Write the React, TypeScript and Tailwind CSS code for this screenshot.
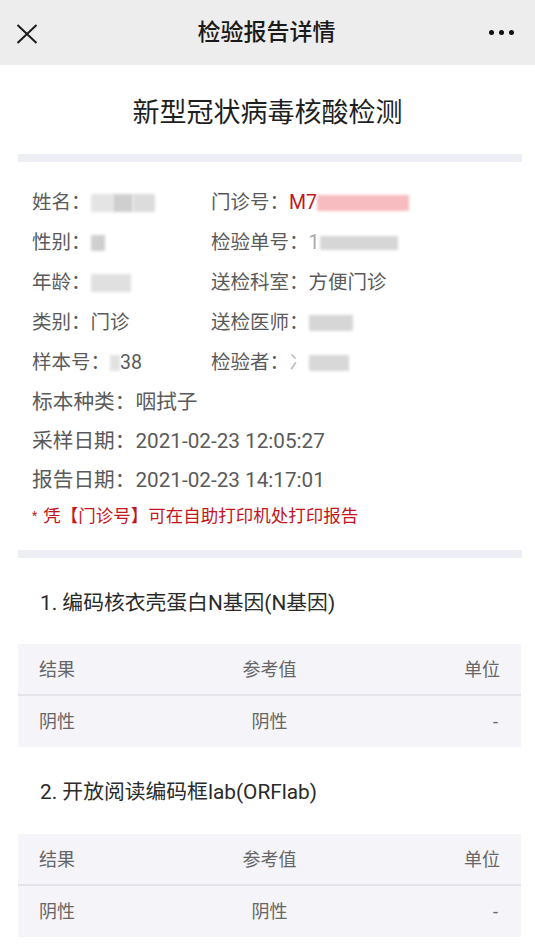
import React from "react";

function Blur({ w, h = 18, color = "bg-[#d9d9d9]", className = "" }: { w: number; h?: number; color?: string; className?: string }) {
  return (
    <span
      className={`inline-block align-middle blur-[1.5px] ${color} ${className}`}
      style={{ width: w, height: h }}
    />
  );
}

function InfoRow({ label, children }: { label: string; children?: React.ReactNode }) {
  return (
    <div className="flex items-center h-full whitespace-nowrap">
      <span>{label}：</span>
      {children}
    </div>
  );
}

const rows: [React.ReactNode, React.ReactNode][] = [
  [
    <InfoRow label="姓名">
      <span className="inline-flex">
        <Blur w={22} color="bg-[#e4e4e4]" />
        <Blur w={20} color="bg-[#cfcfcf]" />
        <Blur w={22} color="bg-[#dcdcdc]" />
      </span>
    </InfoRow>,
    <InfoRow label="门诊号">
      <span className="text-[#c4161c]">M7</span>
      <Blur w={92} h={16} color="bg-[#f7bcbf]" />
    </InfoRow>,
  ],
  [
    <InfoRow label="性别">
      <Blur w={14} h={16} color="bg-[#cfcfcf]" />
    </InfoRow>,
    <InfoRow label="检验单号">
      <span className="text-[#aaa]">1</span>
      <Blur w={78} h={14} color="bg-[#d6d6d6]" />
    </InfoRow>,
  ],
  [
    <InfoRow label="年龄">
      <Blur w={40} h={18} color="bg-[#e0e0e0]" />
    </InfoRow>,
    <InfoRow label="送检科室">方便门诊</InfoRow>,
  ],
  [
    <InfoRow label="类别">门诊</InfoRow>,
    <InfoRow label="送检医师">
      <Blur w={44} h={16} color="bg-[#d6d6d6]" />
    </InfoRow>,
  ],
  [
    <InfoRow label="样本号">
      <Blur w={10} h={16} color="bg-[#e2e2e2]" />
      <span>38</span>
    </InfoRow>,
    <InfoRow label="检验者">
      <span className="text-[#bbb]">冫</span>
      <Blur w={40} h={16} color="bg-[#d8d8d8]" />
    </InfoRow>,
  ],
];

const singles: [string, string][] = [
  ["标本种类", "咽拭子"],
  ["采样日期", "2021-02-23 12:05:27"],
  ["报告日期", "2021-02-23 14:17:01"],
];

function ResultTable() {
  return (
    <div className="ml-[18px] mr-[14px] bg-[#f5f4f8] text-[18px] text-[#666]">
      <div className="grid grid-cols-3 items-center h-[52px] px-[21px] border-b-2 border-[#e4e3e9]">
        <span>结果</span>
        <span className="text-center">参考值</span>
        <span className="text-right">单位</span>
      </div>
      <div className="grid grid-cols-3 items-center h-[51px] px-[21px]">
        <span>阴性</span>
        <span className="text-center">阴性</span>
        <span className="text-right pr-[2px]">-</span>
      </div>
    </div>
  );
}

export default function App() {
  return (
    <div className="w-[535px] min-h-[950px] bg-white font-[Roboto,'Noto_Sans_CJK_SC',sans-serif] pb-4">
      <header className="h-[65px] bg-[#ededed] flex items-center justify-between pl-[16px] pr-[21px]">
        <svg width="22" height="20" viewBox="0 0 22 20" className="mt-[2px]">
          <path d="M1.5 1 L20.5 19 M20.5 1 L1.5 19" stroke="#1c1c1c" strokeWidth="2" />
        </svg>
        <h1 className="text-[23px] font-medium text-[#1a1a1a] mt-[2px] ml-[6px]">检验报告详情</h1>
        <div className="flex gap-[5px]">
          <span className="w-[5px] h-[5px] rounded-full bg-[#111]" />
          <span className="w-[5px] h-[5px] rounded-full bg-[#111]" />
          <span className="w-[5px] h-[5px] rounded-full bg-[#111]" />
        </div>
      </header>

      <h2 className="pt-[31px] leading-[34px] text-[27px] text-center text-[#1f1f1f]">新型冠状病毒核酸检测</h2>
      <div className="mt-[24px] h-[8px] ml-[18px] mr-[13px] bg-[#eeeef5]" />

      <div className="pt-[21px] pl-[32px] text-[19.5px] text-[#5a5a5a]">
        {rows.map(([l, r], i) => (
          <div key={i} className="flex h-[40px]">
            <div className="w-[179px]">{l}</div>
            <div>{r}</div>
          </div>
        ))}
        {singles.map(([l, v]) => (
          <div key={l} className="h-[39px] text-[20.7px]">
            <InfoRow label={l}>{v}</InfoRow>
          </div>
        ))}
        <div className="h-[32px] flex items-center text-[17.5px] text-[#c4161c]">
          <span className="text-[12px] mr-[6px]">*</span>
          <span>凭【门诊号】可在自助打印机处打印报告</span>
        </div>
      </div>
      <div className="mt-[18px] h-[8px] ml-[18px] mr-[13px] bg-[#eeeef5]" />

      <h3 className="mt-[31px] pl-[40px] leading-[28px] text-[20.8px] text-[#2a2a2a]">1. 编码核衣壳蛋白N基因(N基因)</h3>
      <div className="mt-[27px]">
        <ResultTable />
      </div>

      <h3 className="mt-[31px] pl-[40px] leading-[28px] text-[20.8px] text-[#2a2a2a]">2. 开放阅读编码框lab(ORFlab)</h3>
      <div className="mt-[28px]">
        <ResultTable />
      </div>
    </div>
  );
}
